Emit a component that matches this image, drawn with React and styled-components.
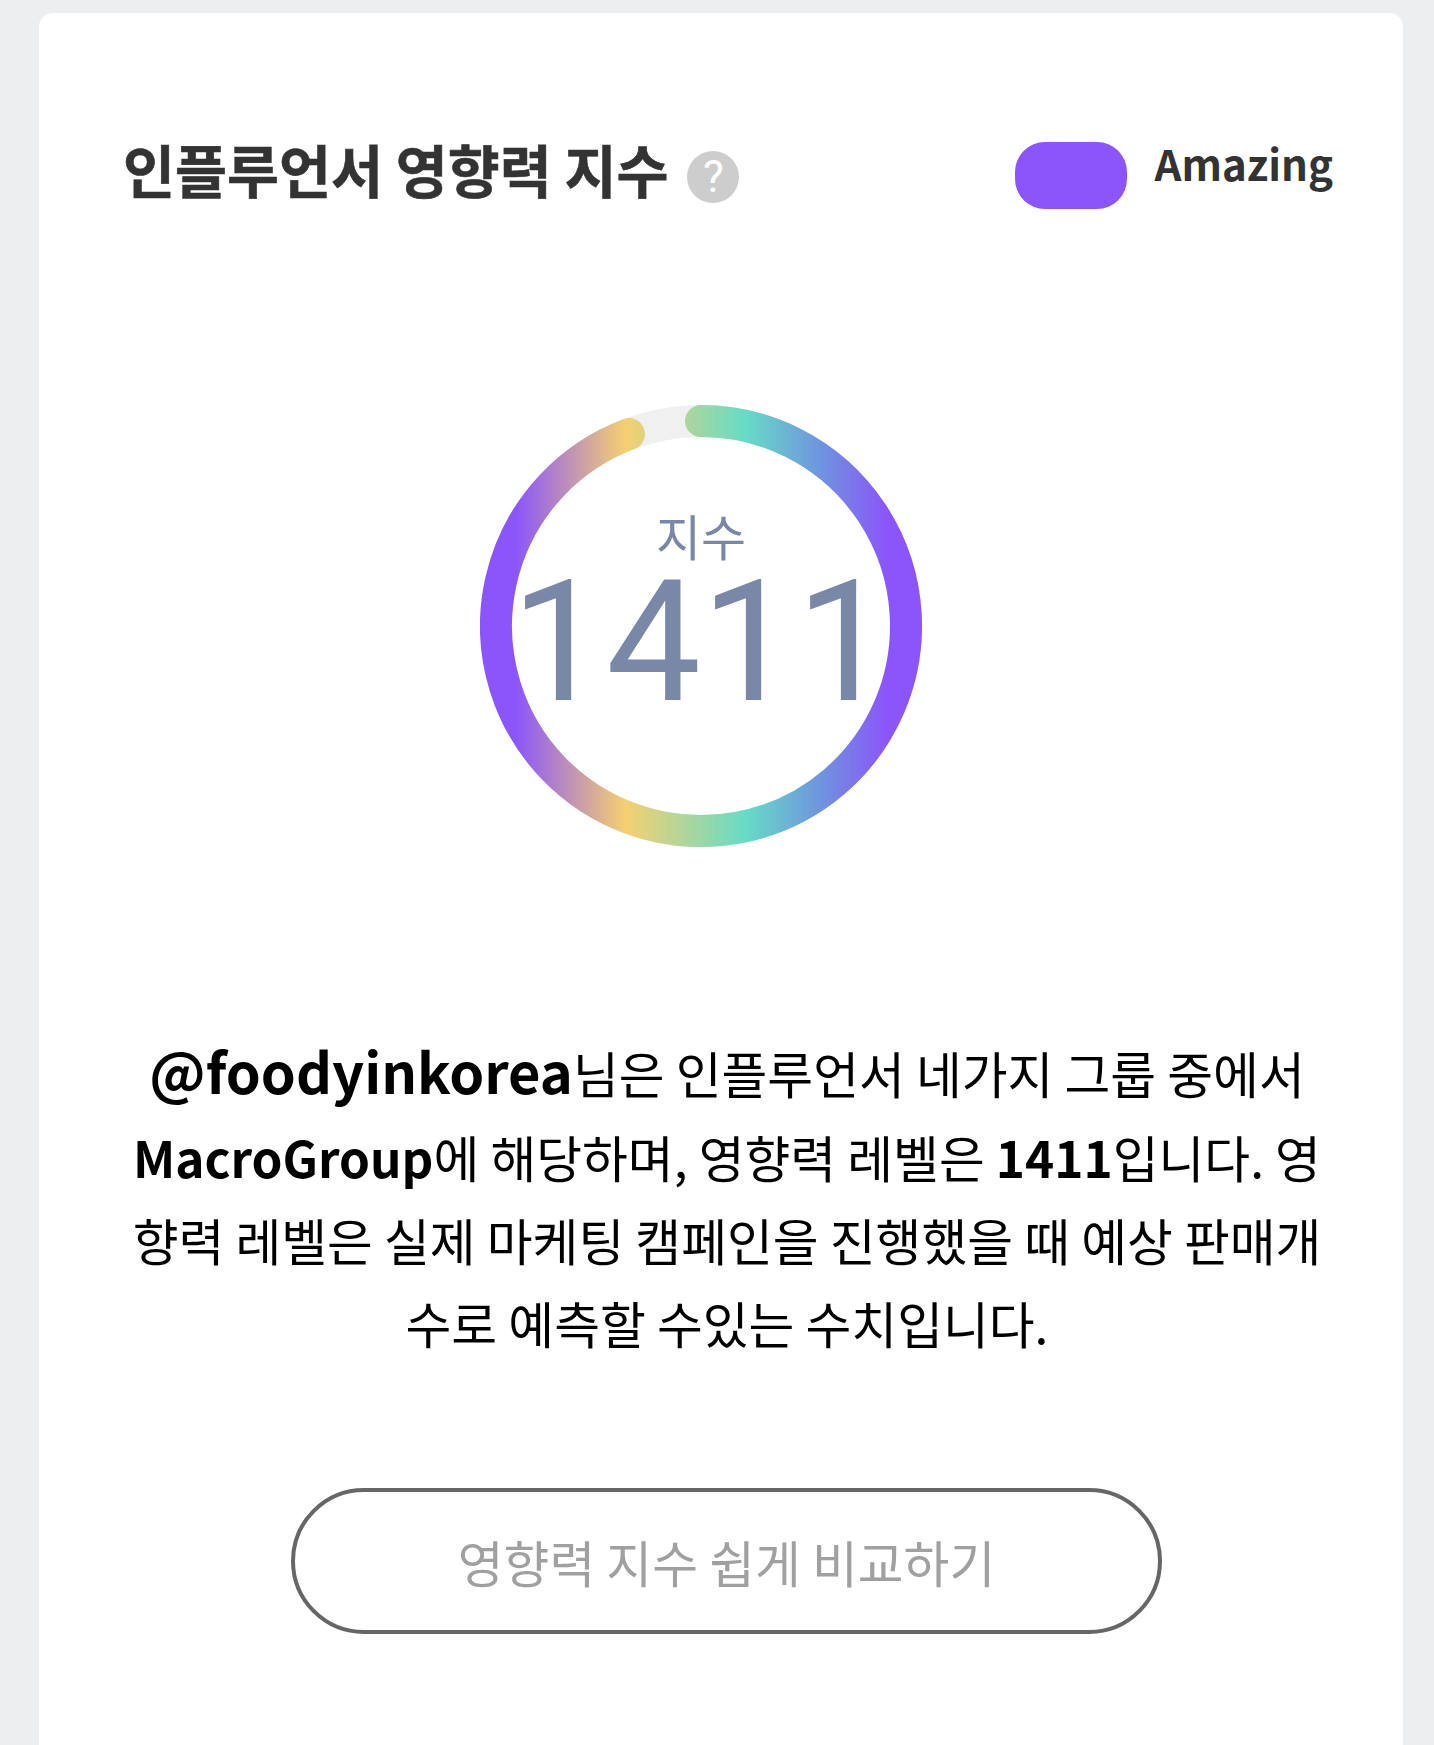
import React from 'react';
import styled, { createGlobalStyle } from 'styled-components';

const GlobalStyle = createGlobalStyle`
  html, body {
    margin: 0;
    padding: 0;
    background: #eceef0;
  }
`;

const Page = styled.div`
  width: 1434px;
  height: 1745px;
  box-sizing: border-box;
  padding: 13px 31px 0 39px;
  overflow: hidden;
  font-family: "Noto Sans CJK KR", "Noto Sans", sans-serif;
`;

const Card = styled.section`
  height: 100%;
  box-sizing: border-box;
  padding: 116px 70px 0 84px;
  background: #fff;
  border-radius: 14px 14px 0 0;
  display: flex;
  flex-direction: column;
`;

const Header = styled.header`
  display: flex;
  justify-content: space-between;
  align-items: flex-start;
  height: 82px;
`;

const TitleGroup = styled.div`
  display: flex;
  align-items: center;
  gap: 19px;
`;

const Title = styled.h2`
  margin: 0;
  font-size: 56.5px;
  line-height: 78px;
  font-weight: 700;
  color: #333;
  -webkit-text-stroke: 0.6px #333;
`;

const HelpBadge = styled.span`
  width: 52px;
  height: 52px;
  margin-top: 17px;
  border-radius: 50%;
  background: #cdcdcd;
  color: #fff;
  display: flex;
  align-items: center;
  justify-content: center;
  font-family: Roboto, sans-serif;
  font-size: 44px;
  font-weight: 400;
  line-height: 1;
`;

const Legend = styled.div`
  display: flex;
  align-items: flex-start;
  gap: 28px;
  margin-top: 13px;
`;

const LegendSwatch = styled.span`
  width: 112px;
  height: 67px;
  border-radius: 30px;
  background: #8b55fb;
`;

const LegendLabel = styled.span`
  font-size: 42px;
  line-height: 48px;
  font-weight: 700;
  color: #333;
  margin-top: -3px;
`;

const Gauge = styled.div`
  width: 442px;
  height: 442px;
  margin: 194px 0 0 357px;
  display: grid;
  place-items: center;
  > * {
    grid-area: 1 / 1;
  }
`;

const GaugeText = styled.div`
  display: flex;
  flex-direction: column;
  align-items: center;
  gap: 4px;
  margin-top: -28px;
  color: #7a88a8;
`;

const GaugeLabel = styled.span`
  font-size: 49px;
  line-height: 56px;
`;

const GaugeValue = styled.span`
  font-family: Roboto, sans-serif;
  font-size: 169px;
  line-height: 150px;
  font-weight: 400;
`;

const Description = styled.p`
  margin: 177px 2px 0 0;
  font-size: 49.8px;
  line-height: 83px;
  color: #000;
  text-align: center;
  white-space: nowrap;
`;

const Strong = styled.strong`
  font-weight: 700;
  font-size: ${(props) => props.$size || 49.5}px;
  line-height: ${(props) => props.$lead || 83}px;
`;

const CompareButton = styled.button`
  align-self: center;
  width: 871px;
  height: 146px;
  margin: 124px 3px 0 0;
  box-sizing: border-box;
  background: #fff;
  border: 4px solid #666;
  border-radius: 73px;
  color: #a0a0a0;
  font-family: inherit;
  font-size: 49.8px;
`;

const RADIUS = 205;
const CENTER = 221;
const GAP_ANGLE = (20.6 * Math.PI) / 180;

function GaugeRing() {
  const endX = CENTER - RADIUS * Math.sin(GAP_ANGLE);
  const endY = CENTER - RADIUS * Math.cos(GAP_ANGLE);

  return (
    <svg width="442" height="442" viewBox="0 0 442 442">
      <defs>
        <linearGradient id="ringGradient" gradientUnits="userSpaceOnUse" x1="0" y1="0" x2="442" y2="0">
          <stop offset="0.08" stopColor="#8b55fb" />
          <stop offset="0.33" stopColor="#f5d070" />
          <stop offset="0.6" stopColor="#66dcc6" />
          <stop offset="0.78" stopColor="#7090e0" />
          <stop offset="0.92" stopColor="#8b55fb" />
        </linearGradient>
      </defs>
      <circle cx={CENTER} cy={CENTER} r={RADIUS} fill="none" stroke="#f0f0f0" strokeWidth="32" />
      <path
        d={`M ${CENTER} ${CENTER - RADIUS} A ${RADIUS} ${RADIUS} 0 1 1 ${endX} ${endY}`}
        fill="none"
        stroke="url(#ringGradient)"
        strokeWidth="32"
        strokeLinecap="round"
      />
    </svg>
  );
}

export default function App() {
  return (
    <Page>
      <GlobalStyle />
      <Card>
        <Header>
          <TitleGroup>
            <Title>인플루언서 영향력 지수</Title>
            <HelpBadge>?</HelpBadge>
          </TitleGroup>
          <Legend>
            <LegendSwatch />
            <LegendLabel>Amazing</LegendLabel>
          </Legend>
        </Header>
        <Gauge>
          <GaugeRing />
          <GaugeText>
            <GaugeLabel>지수</GaugeLabel>
            <GaugeValue>1411</GaugeValue>
          </GaugeText>
        </Gauge>
        <Description>
          <Strong $size={56} $lead={91}>@foodyinkorea</Strong>님은 인플루언서 네가지 그룹 중에서
          <br />
          <Strong>MacroGroup</Strong>에 해당하며, 영향력 레벨은 <Strong>1411</Strong>입니다. 영
          <br />
          향력 레벨은 실제 마케팅 캠페인을 진행했을 때 예상 판매개
          <br />
          수로 예측할 수있는 수치입니다.
        </Description>
        <CompareButton>영향력 지수 쉽게 비교하기</CompareButton>
      </Card>
    </Page>
  );
}
